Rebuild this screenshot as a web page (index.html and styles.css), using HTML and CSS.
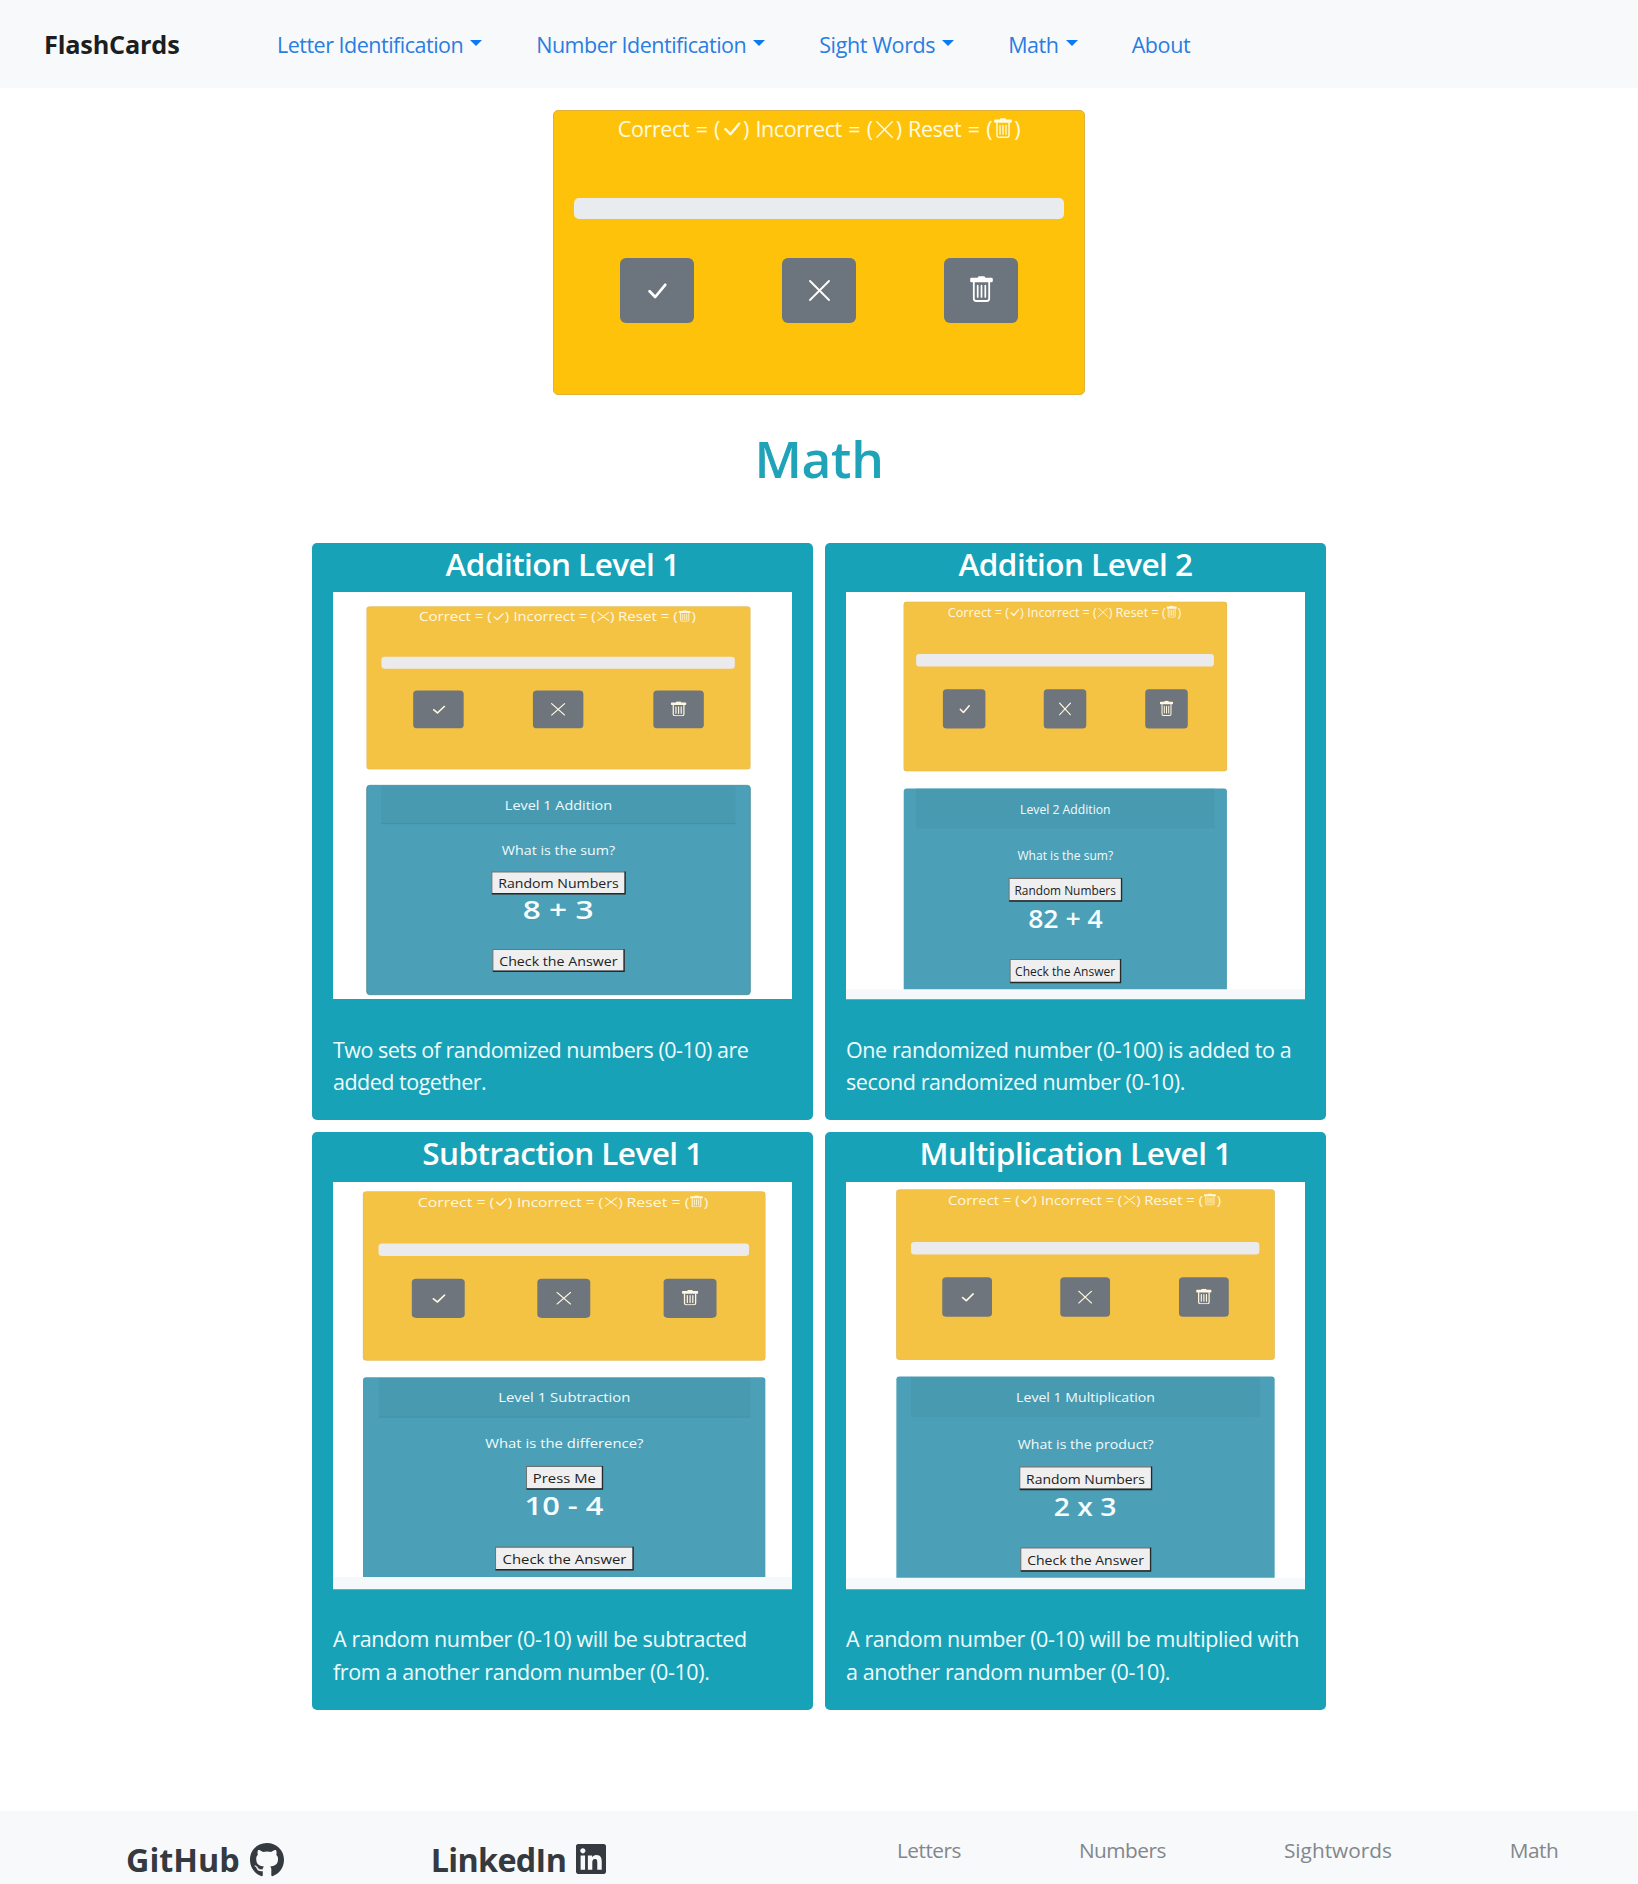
FILE: index.html
```html
<!DOCTYPE html>
<html lang="en">
<head>
<meta charset="utf-8">
<title>FlashCards - Math</title>
<link rel="stylesheet" href="styles.css">
</head>
<body>
<svg class="sprite" width="0" height="0" aria-hidden="true">
  <symbol id="check" viewBox="0 0 19 16" preserveAspectRatio="none"><path d="M1.6 8.2 7.2 14 17.2 1.8" fill="none" stroke="currentColor" stroke-width="2.7" stroke-linecap="round" stroke-linejoin="round"/></symbol>
  <symbol id="cross" viewBox="0 0 21 21" preserveAspectRatio="none"><path d="M1 1 20 20M20 1 1 20" fill="none" stroke="currentColor" stroke-width="1.8" stroke-linecap="round"/></symbol>
  <symbol id="trash" viewBox="0 0 23 26" preserveAspectRatio="none"><path d="M1.5 1.8H7.6Q8 .2 9 .2H14Q15 .2 15.4 1.8H21.5Q22.8 1.8 22.8 3V5Q22.8 6.3 21.5 6.3H1.5Q.2 6.3 .2 5V3Q.2 1.8 1.5 1.8Z" fill="currentColor"/><path d="M3.8 6V22.5Q3.8 25 6.3 25H16.7Q19.2 25 19.2 22.5V6" fill="none" stroke="currentColor" stroke-width="1.8"/><path d="M7.7 9.5V21M11.5 9.5V21M15.3 9.5V21" fill="none" stroke="currentColor" stroke-width="1.7" stroke-linecap="round"/></symbol>
  <symbol id="score" viewBox="0 0 533 285" preserveAspectRatio="none">
    <rect x=".5" y=".5" width="532" height="284" rx="5" fill="#f5c344" stroke="#dcb456"/>
    <g class="pic-status">
      <use href="#check" x="176" y="12" width="15" height="13"/>
      <use href="#cross" x="320" y="10" width="17" height="16"/>
      <use href="#trash" x="433" y="7" width="17" height="20"/>
    </g>
    <rect x="21" y="88" width="490" height="21" rx="5" fill="#ebebed"/>
    <g fill="#6e757c"><rect x="65" y="147" width="70" height="66" rx="6"/><rect x="231" y="147" width="70" height="66" rx="6"/><rect x="398" y="147" width="70" height="66" rx="6"/></g>
    <g class="pic-status"><use href="#check" x="92" y="173" width="18" height="15"/><use href="#cross" x="256" y="169" width="20" height="22"/><use href="#trash" x="422" y="166" width="22" height="26"/></g>
  </symbol>
</svg>

<nav class="navbar">
  <a class="brand">FlashCards</a>
  <a class="nav-link caret long">Letter Identification</a>
  <a class="nav-link caret long">Number Identification</a>
  <a class="nav-link caret">Sight Words</a>
  <a class="nav-link caret">Math</a>
  <a class="nav-link">About</a>
</nav>

<main>
  <section class="score-card">
    <p class="status"><span>Correct = (</span><svg class="s-check"><use href="#check"/></svg><span>) Incorrect = (</span><svg class="s-cross"><use href="#cross"/></svg><span>) Reset = (</span><svg class="s-trash"><use href="#trash"/></svg><span>)</span></p>
    <div class="progress"></div>
    <div class="buttons">
      <button class="btn"><svg class="b-check"><use href="#check"/></svg></button>
      <button class="btn"><svg class="b-cross"><use href="#cross"/></svg></button>
      <button class="btn"><svg class="b-trash"><use href="#trash"/></svg></button>
    </div>
  </section>

  <h1>Math</h1>

  <section class="levels">
    <article class="level">
      <h2>Addition Level 1</h2>
      <svg class="thumb" viewBox="99 162 1378 1064" preserveAspectRatio="none">
        <use href="#score" x="199" y="199" width="1154" height="427"/>
        <svg class="pic-status" x="199" y="199" width="1154" height="427" viewBox="0 0 533 285" preserveAspectRatio="none">
          <text x="73" y="26" textLength="101" lengthAdjust="spacingAndGlyphs">Correct = (</text><text x="192" y="26">)</text>
          <text x="204" y="26" textLength="114" lengthAdjust="spacingAndGlyphs">Incorrect = (</text><text x="338" y="26">)</text>
          <text x="349" y="26" textLength="83" lengthAdjust="spacingAndGlyphs">Reset = (</text><text x="451" y="26">)</text>
        </svg>
        <rect x="200" y="667" width="1152" height="547" rx="9" fill="#4b9fb6" stroke="#468896" stroke-width="2"/>
        <path d="M244 668H1307V766H244z" fill="#489ab1"/><path d="M244 767H1307" stroke="#408ba1" stroke-width="2"/>
        <g class="pic-text">
          <text x="615" y="732" textLength="322" lengthAdjust="spacingAndGlyphs">Level 1 Addition</text>
          <text x="606" y="848" textLength="340" lengthAdjust="spacingAndGlyphs">What is the sum?</text>
        </g>
        <g class="pic-btn"><path class="face" d="M576 893H976V950H576z"/><path class="shade" d="M976 892V950H576"/><text x="595" y="934" textLength="362" lengthAdjust="spacingAndGlyphs">Random Numbers</text></g>
        <text class="pic-sum" x="669" y="1016" textLength="212" lengthAdjust="spacingAndGlyphs">8 + 3</text>
        <g class="pic-btn"><path class="face" d="M579 1096H973V1153H579z"/><path class="shade" d="M973 1095V1153H579"/><text x="598" y="1138" textLength="355" lengthAdjust="spacingAndGlyphs">Check the Answer</text></g>
      </svg>
      <p class="tight">Two sets of randomized numbers (0-10) are<br>added together.</p>
    </article>

    <article class="level">
      <h2>Addition Level 2</h2>
      <svg class="thumb" viewBox="80 162 1376 1064" preserveAspectRatio="none">
        <path d="M80 1200H1456V1226H80z" fill="#f6f9fb"/>
        <use href="#score" x="252" y="187" width="971" height="444"/>
        <svg class="pic-status" x="252" y="187" width="971" height="444" viewBox="0 0 533 285" preserveAspectRatio="none">
          <text x="73" y="26" textLength="101" lengthAdjust="spacingAndGlyphs">Correct = (</text><text x="192" y="26">)</text>
          <text x="204" y="26" textLength="114" lengthAdjust="spacingAndGlyphs">Incorrect = (</text><text x="338" y="26">)</text>
          <text x="349" y="26" textLength="83" lengthAdjust="spacingAndGlyphs">Reset = (</text><text x="451" y="26">)</text>
        </svg>
        <path d="M253 1200V683Q253 675 262 675H1213Q1222 675 1222 683V1200z" fill="#4b9fb6"/>
        <path d="M290 676H1185V780H290z" fill="#489ab1"/>
        <g class="pic-text">
          <text x="602" y="742" textLength="271" lengthAdjust="spacingAndGlyphs">Level 2 Addition</text>
          <text x="594" y="863" textLength="287" lengthAdjust="spacingAndGlyphs">What is the sum?</text>
        </g>
        <g class="pic-btn"><path class="face" d="M569 910H906V969H569z"/><path class="shade" d="M906 909V969H569"/><text x="585" y="954" textLength="304" lengthAdjust="spacingAndGlyphs">Random Numbers</text></g>
        <text class="pic-sum" x="626" y="1039" textLength="224" lengthAdjust="spacingAndGlyphs">82 + 4</text>
        <g class="pic-btn"><path class="face" d="M572 1122H903V1182H572z"/><path class="shade" d="M903 1121V1182H572"/><text x="587" y="1166" textLength="300" lengthAdjust="spacingAndGlyphs">Check the Answer</text></g>
      </svg>
      <p>One randomized number (0-100) is added to a<br>second randomized number (0-10).</p>
    </article>

    <article class="level">
      <h2>Subtraction Level 1</h2>
      <svg class="thumb" viewBox="99 162 1378 1064" preserveAspectRatio="none">
        <path d="M99 1194H1477V1226H99z" fill="#f6f9fb"/>
        <use href="#score" x="188" y="186" width="1210" height="443"/>
        <svg class="pic-status" x="188" y="186" width="1210" height="443" viewBox="0 0 533 285" preserveAspectRatio="none">
          <text x="73" y="26" textLength="101" lengthAdjust="spacingAndGlyphs">Correct = (</text><text x="192" y="26">)</text>
          <text x="204" y="26" textLength="114" lengthAdjust="spacingAndGlyphs">Incorrect = (</text><text x="338" y="26">)</text>
          <text x="349" y="26" textLength="83" lengthAdjust="spacingAndGlyphs">Reset = (</text><text x="451" y="26">)</text>
        </svg>
        <path d="M189 1194V680Q189 672 199 672H1388Q1397 672 1397 680V1194z" fill="#4b9fb6"/>
        <path d="M236 674H1352V775H236z" fill="#489ab1"/><path d="M236 776H1352" stroke="#408ba1" stroke-width="2"/>
        <g class="pic-text">
          <text x="595" y="738" textLength="397" lengthAdjust="spacingAndGlyphs">Level 1 Subtraction</text>
          <text x="556" y="858" textLength="475" lengthAdjust="spacingAndGlyphs">What is the difference?</text>
        </g>
        <g class="pic-btn"><path class="face" d="M680 905H908V964H680z"/><path class="shade" d="M908 904V964H680"/><text x="699" y="949" textLength="189" lengthAdjust="spacingAndGlyphs">Press Me</text></g>
        <text class="pic-sum" x="674" y="1033" textLength="237" lengthAdjust="spacingAndGlyphs">10 - 4</text>
        <g class="pic-btn"><path class="face" d="M587 1116H1000V1175H587z"/><path class="shade" d="M1000 1115V1175H587"/><text x="608" y="1160" textLength="372" lengthAdjust="spacingAndGlyphs">Check the Answer</text></g>
      </svg>
      <p>A random number (0-10) will be subtracted<br>from a another random number (0-10).</p>
    </article>

    <article class="level">
      <h2>Multiplication Level 1</h2>
      <svg class="thumb" viewBox="80 162 1376 1064" preserveAspectRatio="none">
        <path d="M80 1196H1456V1226H80z" fill="#f6f9fb"/>
        <use href="#score" x="230" y="181" width="1136" height="446"/>
        <svg class="pic-status" x="230" y="181" width="1136" height="446" viewBox="0 0 533 285" preserveAspectRatio="none">
          <text x="73" y="26" textLength="101" lengthAdjust="spacingAndGlyphs">Correct = (</text><text x="192" y="26">)</text>
          <text x="204" y="26" textLength="114" lengthAdjust="spacingAndGlyphs">Incorrect = (</text><text x="338" y="26">)</text>
          <text x="349" y="26" textLength="83" lengthAdjust="spacingAndGlyphs">Reset = (</text><text x="451" y="26">)</text>
        </svg>
        <path d="M231 1196V678Q231 670 240 670H1356Q1365 670 1365 678V1196z" fill="#4b9fb6"/>
        <path d="M275 672H1321V776H275z" fill="#489ab1"/>
        <g class="pic-text">
          <text x="590" y="737" textLength="416" lengthAdjust="spacingAndGlyphs">Level 1 Multiplication</text>
          <text x="595" y="859" textLength="407" lengthAdjust="spacingAndGlyphs">What is the product?</text>
        </g>
        <g class="pic-btn"><path class="face" d="M601 906H996V965H601z"/><path class="shade" d="M996 905V965H601"/><text x="620" y="950" textLength="356" lengthAdjust="spacingAndGlyphs">Random Numbers</text></g>
        <text class="pic-sum" x="703" y="1035" textLength="188" lengthAdjust="spacingAndGlyphs">2 x 3</text>
        <g class="pic-btn"><path class="face" d="M604 1118H993V1178H604z"/><path class="shade" d="M993 1117V1178H604"/><text x="623" y="1163" textLength="350" lengthAdjust="spacingAndGlyphs">Check the Answer</text></g>
      </svg>
      <p>A random number (0-10) will be multiplied with<br>a another random number (0-10).</p>
    </article>
  </section>
</main>

<footer class="footer">
  <div class="social">
    <a>GitHub <svg class="github" viewBox="0 8 496 480"><path d="M165.9 397.4c0 2-2.3 3.6-5.2 3.6-3.3.3-5.6-1.3-5.6-3.6 0-2 2.3-3.6 5.2-3.6 3-.3 5.6 1.3 5.6 3.6zm-31.1-4.5c-.7 2 1.3 4.3 4.3 4.9 2.6 1 5.6 0 6.2-2s-1.3-4.3-4.3-5.2c-2.6-.7-5.5.3-6.2 2.3zm44.2-1.7c-2.9.7-4.9 2.6-4.6 4.9.3 2 2.9 3.3 5.9 2.6 2.9-.7 4.9-2.6 4.6-4.6-.3-1.9-3-3.2-5.9-2.9zM244.8 8C106.1 8 0 113.3 0 252c0 110.9 69.8 205.8 169.5 239.2 12.8 2.3 17.3-5.6 17.3-12.1 0-6.2-.3-40.4-.3-61.4 0 0-70 15-84.7-29.8 0 0-11.4-29.1-27.8-36.6 0 0-22.9-15.7 1.6-15.4 0 0 24.9 2 38.6 25.8 21.9 38.6 58.6 27.5 72.9 20.9 2.3-16 8.8-27.1 16-33.7-55.9-6.2-112.3-14.3-112.3-110.5 0-27.5 7.6-41.3 23.6-58.9-2.6-6.5-11.1-33.3 2.6-67.9 20.9-6.5 69 27 69 27 20-5.6 41.5-8.5 62.8-8.5s42.8 2.9 62.8 8.5c0 0 48.1-33.6 69-27 13.7 34.7 5.2 61.4 2.6 67.9 16 17.7 25.8 31.5 25.8 58.9 0 96.5-58.9 104.2-114.8 110.5 9.2 7.9 17 22.9 17 46.4 0 33.7-.3 75.4-.3 83.6 0 6.5 4.6 14.4 17.3 12.1C428.2 457.8 496 362.9 496 252 496 113.3 383.5 8 244.8 8zM97.2 352.9c-1.3 1-1 3.3.7 5.2 1.6 1.6 3.9 2.3 5.2 1 1.3-1 1-3.3-.7-5.2-1.6-1.6-3.9-2.3-5.2-1zm-10.8-8.1c-.7 1.3.3 2.9 2.3 3.9 1.6 1 3.6.7 4.3-.7.7-1.3-.3-2.9-2.3-3.9-2-.6-3.6-.3-4.3.7zm32.4 35.6c-1.6 1.3-1 4.3 1.3 6.2 2.3 2.3 5.2 2.6 6.5 1 1.3-1.3.7-4.3-1.3-6.2-2.2-2.3-5.2-2.6-6.5-1zm-11.4-14.7c-1.6 1-1.6 3.6 0 5.9 1.6 2.3 4.3 3.3 5.6 2.3 1.6-1.3 1.6-3.9 0-6.2-1.4-2.3-4-3.3-5.6-2z"/></svg></a>
    <a class="li">LinkedIn <svg class="linkedin" viewBox="0 32 448 448"><path d="M416 32H31.9C14.3 32 0 46.5 0 64.3v383.4C0 465.5 14.3 480 31.9 480H416c17.6 0 32-14.5 32-32.3V64.3c0-17.8-14.4-32.3-32-32.3zM135.4 416H69V202.2h66.5V416zm-33.2-243c-21.3 0-38.5-17.3-38.5-38.5S80.9 96 102.2 96c21.2 0 38.5 17.3 38.5 38.5 0 21.3-17.2 38.5-38.5 38.5zm282.1 243h-66.4V312c0-24.8-.5-56.7-34.5-56.7-34.6 0-39.9 27-39.9 54.9V416h-66.4V202.2h63.7v29.2h.9c8.9-16.8 30.6-34.5 62.9-34.5 67.2 0 79.7 44.3 79.7 101.9V416z"/></svg></a>
  </div>
  <div class="footer-links"><a>Letters</a><a>Numbers</a><a class="wide">Sightwords</a><a>Math</a></div>
</footer>
</body>
</html>
```

FILE: styles.css
```css
* { box-sizing: border-box; }
body { margin: 0; background: #fff; font-family: "Open Sans", "Noto Sans", sans-serif; font-size: 21.5px; line-height: 32.5px; overflow: hidden; }
h1, h2, p { margin: 0; }
svg { display: block; overflow: visible; }
.sprite { position: absolute; }

.navbar { height: 88px; padding: 2px 44px 0; background: #f8f9fb; display: flex; align-items: center; white-space: nowrap; }
.brand { font-size: 25.3px; font-weight: 700; color: #1d1e20; width: 233px; letter-spacing: -0.2px; padding-bottom: 2px; }
.nav-link { color: #2a7de1; margin-right: 54px; letter-spacing: -0.4px; display: flex; align-items: center; gap: 7px; }
.nav-link.long { letter-spacing: -0.5px; }
.caret::after { content: ""; border: 6.5px solid transparent; border-top-color: #0b7af5; border-bottom: 0; margin-top: -4px; }

.score-card { width: 532px; height: 285px; margin: 22px auto 0; background: #ffc20a; border: 1px solid #dfb03a; border-radius: 5px; padding: 0 20px; color: #fff; }
.status { height: 36px; display: flex; justify-content: center; align-items: center; white-space: pre; letter-spacing: -0.4px; word-spacing: 1.3px; color: #fffbe0; }
.s-check { width: 17px; height: 14px; margin: 0 2px 0 4px; }
.s-cross { width: 17px; height: 17px; margin: 0 3px; }
.s-trash { width: 18px; height: 20px; margin: -2px 2px 0; }
.progress { height: 21px; margin-top: 51px; background: #e9ecef; border-radius: 5px; }
.buttons { display: grid; grid-template-columns: repeat(3, 162px); justify-content: center; justify-items: center; margin-top: 39px; }
.btn { width: 74px; height: 65px; border: 0; border-radius: 6px; background: #6c757d; color: #fff; padding: 0; display: flex; align-items: center; justify-content: center; }
.b-check { width: 19px; height: 16px; }
.b-cross { width: 21px; height: 21px; }
.b-trash { width: 23px; height: 26px; margin-top: -3px; }

h1 { margin-top: 31px; height: 64px; line-height: 64px; text-align: center; font-size: 51.5px; font-weight: 600; color: #1fa3b8; letter-spacing: -0.3px; }

.levels { margin: 52.5px 0 0 312px; width: 1014px; display: grid; grid-template-columns: repeat(2, minmax(0, 1fr)); gap: 12px; }
.level { height: 577.5px; background: #17a2b8; border-radius: 5px; padding: 0 21px; color: #fff; }
.level h2 { height: 49.5px; line-height: 42px; text-align: center; font-size: 31.5px; font-weight: 600; letter-spacing: -0.55px; white-space: nowrap; }
.level p { margin-top: 34.5px; color: #f0fbfc; letter-spacing: -0.4px; white-space: nowrap; }
.level p.tight { letter-spacing: -0.5px; }
.thumb { width: 100%; height: 407.3px; background: #fff; }

.pic-status { fill: #fff8e0; color: #fff8e0; font-size: 20.5px; }
.pic-text { fill: #f2fbfd; font-size: 34px; }
.pic-btn { font-size: 34px; fill: #222; }
.pic-btn .face { fill: #efefef; stroke: #6f7375; stroke-width: 3px; }
.pic-btn .shade { fill: none; stroke: #26292b; stroke-width: 4px; }
.pic-sum { fill: #f5fdff; font-size: 65px; font-weight: 600; }

.footer { margin-top: 101.5px; height: 90px; background: #f8f9fb; display: flex; white-space: nowrap; }
.social { padding: 31px 0 0 126px; width: 897px; display: flex; gap: 147px; font-size: 32.3px; font-weight: 700; color: #343a40; line-height: 34px; }
.social a { display: flex; gap: 10px; height: 34px; align-items: center; }
.social .li { letter-spacing: -0.65px; }
.social svg { fill: #343a40; }
.github { width: 34px; height: 33px; }
.linkedin { width: 30px; height: 30px; }
.footer-links { padding-top: 23px; display: flex; gap: 118px; color: #81878d; font-size: 20.8px; letter-spacing: -0.5px; }
.footer-links .wide { letter-spacing: 0; }
```
